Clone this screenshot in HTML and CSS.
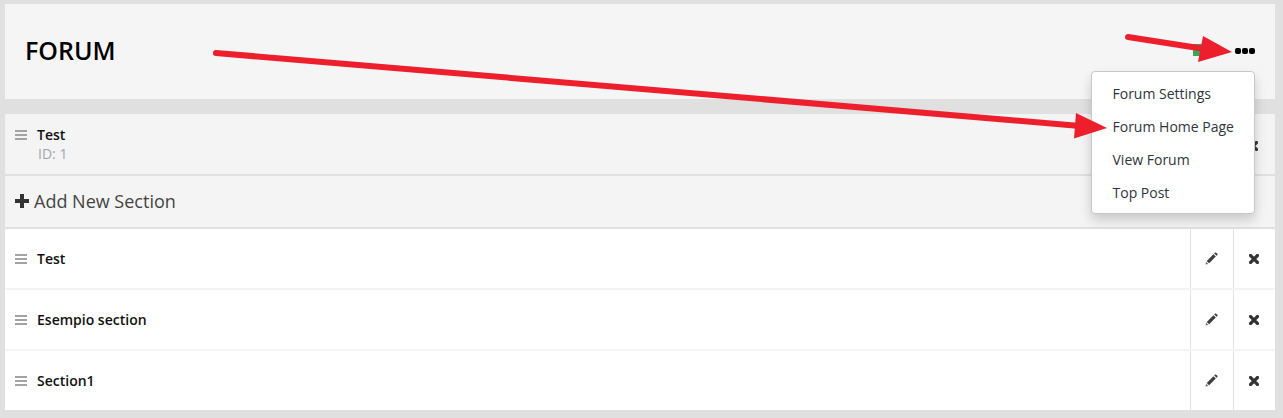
FILE: index.html
```html
<!DOCTYPE html>
<html lang="en">
<head>
<meta charset="utf-8">
<title>Forum</title>
<link rel="stylesheet" href="styles.css">
</head>
<body>
<div class="page">
  <header class="head">
    <h1 class="title">FORUM</h1>
    <div class="tools">
      <span class="green"></span>
      <span class="dots"><i></i><i></i><i></i></span>
    </div>
  </header>
  <div class="forum-row">
    <span class="drag"><i></i><i></i><i></i></span>
    <div class="info"><div class="name">Test</div><div class="id">ID: 1</div></div>
    <span class="x-wrap hdr-x"><svg class="x" viewBox="0 0 10 10"><path d="M1.6 1.6L8.4 8.4M8.4 1.6L1.6 8.4"/></svg></span>
  </div>
  <div class="add-row"><svg class="plus" viewBox="0 0 14 14"><path d="M5 0h4v5h5v4H9v5H5V9H0V5h5z"/></svg><span>Add New Section</span></div>
  <div class="list">
    <div class="row">
      <span class="drag"><i></i><i></i><i></i></span><span class="name grow">Test</span>
      <span class="cell"><svg class="pen" viewBox="0 0 12 12"><path class="tip" d="M0.5 11.5L1 8.8L3.2 11z"/><path d="M1.6 8.2L7.8 2L10 4.2L3.8 10.4z"/><path d="M8.5 1.3L9.3 .5Q9.8 .2 10.3 .6L11.4 1.7Q11.8 2.2 11.5 2.7L10.7 3.5z"/></svg></span>
      <span class="cell last"><svg class="x" viewBox="0 0 10 10"><path d="M1.6 1.6L8.4 8.4M8.4 1.6L1.6 8.4"/></svg></span>
    </div>
    <div class="row">
      <span class="drag"><i></i><i></i><i></i></span><span class="name grow">Esempio section</span>
      <span class="cell"><svg class="pen" viewBox="0 0 12 12"><path class="tip" d="M0.5 11.5L1 8.8L3.2 11z"/><path d="M1.6 8.2L7.8 2L10 4.2L3.8 10.4z"/><path d="M8.5 1.3L9.3 .5Q9.8 .2 10.3 .6L11.4 1.7Q11.8 2.2 11.5 2.7L10.7 3.5z"/></svg></span>
      <span class="cell last"><svg class="x" viewBox="0 0 10 10"><path d="M1.6 1.6L8.4 8.4M8.4 1.6L1.6 8.4"/></svg></span>
    </div>
    <div class="row">
      <span class="drag"><i></i><i></i><i></i></span><span class="name grow">Section1</span>
      <span class="cell"><svg class="pen" viewBox="0 0 12 12"><path class="tip" d="M0.5 11.5L1 8.8L3.2 11z"/><path d="M1.6 8.2L7.8 2L10 4.2L3.8 10.4z"/><path d="M8.5 1.3L9.3 .5Q9.8 .2 10.3 .6L11.4 1.7Q11.8 2.2 11.5 2.7L10.7 3.5z"/></svg></span>
      <span class="cell last"><svg class="x" viewBox="0 0 10 10"><path d="M1.6 1.6L8.4 8.4M8.4 1.6L1.6 8.4"/></svg></span>
    </div>
  </div>
</div>
<nav class="menu">
  <a>Forum Settings</a>
  <a>Forum Home Page</a>
  <a>View Forum</a>
  <a>Top Post</a>
</nav>
<svg class="arrows" viewBox="0 0 1283 418" width="1283" height="418">
  <path class="shaft" d="M216 53L1080 126"/>
  <path class="head-a" d="M1107 128L1076 113L1074 138.500z"/>
  <path class="shaft" d="M1128 37L1205 49"/>
  <path class="head-a" d="M1232 52L1203 36L1198 62z"/>
</svg>
</body>
</html>
```
FILE: styles.css
```css
* { box-sizing: border-box; }
html, body { margin: 0; height: 418px; overflow: hidden; }
body {
  background: #e0e0e0;
  font-family: "Open Sans", sans-serif;
  color: #000;
  position: relative;
}
.page { padding: 4px 8px 0 5px; }
.head {
  height: 95px;
  background: #f5f5f5;
  display: flex;
  align-items: center;
  padding: 0 20px 0 20px;
  margin-bottom: 15px;
}
.title { margin: -4px 0 0; font-size: 25px; font-weight: 600; flex: 1; line-height: 32px; color: #000; }
.tools { display: flex; align-items: center; margin-top: -1px; }
.green { width: 12px; height: 12px; background: #3aa655; margin: -3px 30px 0 0; }
.dots { display: flex; gap: 1px; }
.dots i { width: 6px; height: 6px; border-radius: 2px; background: #000; }
.forum-row {
  height: 60px;
  background: #f4f4f4;
  display: flex;
  align-items: flex-start;
  padding: 11px 1px 0 10px;
  position: relative;
}
.drag { display: flex; flex-direction: column; gap: 2px; width: 12px; margin-right: 10px; flex: none; }
.drag i { height: 2px; background: #a3a3a3; }
.forum-row .drag { margin-top: 5px; }
.info { flex: 1; }
.name { font-size: 14px; font-weight: 600; line-height: 20px; color: #111; }
.id { font-size: 14px; line-height: 18px; color: #a0a5ad; margin-left: 1px; }
.hdr-x { width: 42px; display: flex; justify-content: center; margin-top: 16px; }
.add-row {
  height: 51px;
  margin-top: 2px;
  background: #f4f4f4;
  display: flex;
  align-items: center;
  padding: 0 0 1px 10px;
  font-size: 18px;
  color: #444;
}
.plus { width: 14px; height: 14px; fill: #333; margin-right: 5px; }
.list { margin-top: 2px; background: #f4f4f4; }
.row {
  height: 59px;
  display: flex;
  align-items: center;
  padding-left: 10px;
  background: #fff;
}
.row + .row { margin-top: 2px; }
.grow { flex: 1; }
.cell {
  width: 43px;
  align-self: stretch;
  border-left: 1px solid #e3e3e3;
  display: flex;
  align-items: center;
  justify-content: center;
  padding-right: 1px;
}
.cell.last { width: 42px; }
.pen { width: 13px; height: 13px; fill: #3d3d3d; }
.pen .tip { fill: #777; }
.x { width: 10px; height: 10px; fill: none; stroke: #333; stroke-width: 3.3; stroke-linecap: square; }
.menu {
  position: absolute;
  left: 1091px;
  top: 71px;
  width: 164px;
  height: 143px;
  background: #fff;
  border: 1px solid #c8c8c8;
  border-radius: 4px;
  box-shadow: 0 6px 12px rgba(0,0,0,.175);
  padding: 5px 0;
  display: flex;
  flex-direction: column;
  font-size: 14px;
}
.menu a { height: 33px; line-height: 33px; padding-left: 20.5px; color: #2f3540; }
.arrows { position: absolute; left: 0; top: 0; pointer-events: none; }
.shaft { stroke: #ee1f2d; stroke-width: 6; stroke-linecap: round; fill: none; }
.head-a { fill: #ee1f2d; }
```
